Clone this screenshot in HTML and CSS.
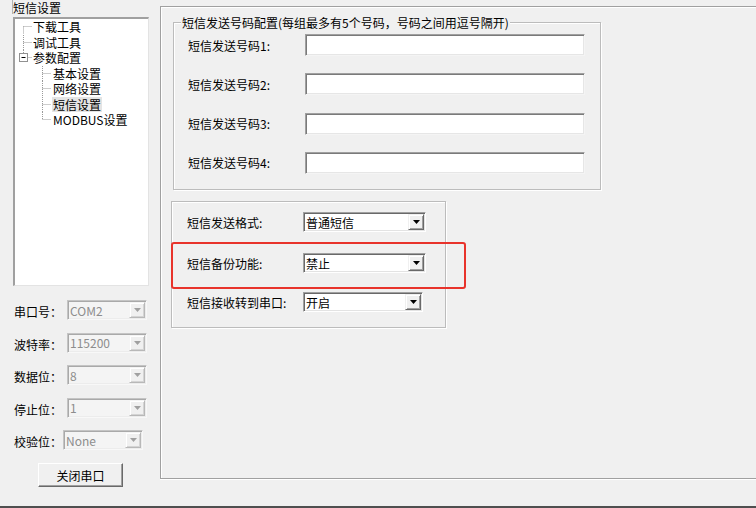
FILE: index.html
```html
<!DOCTYPE html>
<html lang="zh-CN">
<head>
<meta charset="utf-8">
<title>短信设置</title>
<link rel="stylesheet" href="styles.css">
</head>
<body>
<div class="app">
  <aside class="side">
    <div class="caption"><span>短信设置</span></div>
    <div class="tree">
      <div class="node">
        <svg class="guide" width="18" height="15.5" viewBox="0 0 18 15.5"><path class="dot" d="M8.5 7.5V15.5M8.5 7.5H17"/></svg>
        <span class="txt">下载工具</span>
      </div>
      <div class="node">
        <svg class="guide" width="18" height="15.5" viewBox="0 0 18 15.5"><path class="dot" d="M8.5 0V15.5M8.5 7.5H17"/></svg>
        <span class="txt">调试工具</span>
      </div>
      <div class="node">
        <svg class="guide" width="18" height="15.5" viewBox="0 0 18 15.5"><path class="dot" d="M8.5 0V3.5M12.5 7.5H17"/><rect x="4.5" y="3.5" width="8" height="8" fill="#fff" stroke="#919191"/><path d="M6.5 7.5H10.5" stroke="#000"/></svg>
        <span class="txt">参数配置</span>
      </div>
      <div class="node">
        <svg class="guide" width="38" height="15.5" viewBox="0 0 38 15.5"><path class="dot" d="M27.5 0V15.5M27.5 7.5H36"/></svg>
        <span class="txt">基本设置</span>
      </div>
      <div class="node">
        <svg class="guide" width="38" height="15.5" viewBox="0 0 38 15.5"><path class="dot" d="M27.5 0V15.5M27.5 7.5H36"/></svg>
        <span class="txt">网络设置</span>
      </div>
      <div class="node">
        <svg class="guide" width="38" height="15.5" viewBox="0 0 38 15.5"><path class="dot" d="M27.5 0V15.5M27.5 7.5H36"/></svg>
        <span class="txt selected">短信设置</span>
      </div>
      <div class="node">
        <svg class="guide" width="38" height="15.5" viewBox="0 0 38 15.5"><path class="dot" d="M27.5 0V7.5M27.5 7.5H36"/></svg>
        <span class="txt">MODBUS设置</span>
      </div>
    </div>

    <div class="port-form">
      <div class="prow">
        <label class="plabel">串口号：</label>
        <div class="combo disabled pcombo"><span class="val">COM2</span><span class="dbtn"><svg width="7" height="4" viewBox="0 0 7 4"><path d="M0 0H7L3.5 4Z"/></svg></span></div>
      </div>
      <div class="prow">
        <label class="plabel">波特率：</label>
        <div class="combo disabled pcombo"><span class="val">115200</span><span class="dbtn"><svg width="7" height="4" viewBox="0 0 7 4"><path d="M0 0H7L3.5 4Z"/></svg></span></div>
      </div>
      <div class="prow">
        <label class="plabel">数据位：</label>
        <div class="combo disabled pcombo"><span class="val">8</span><span class="dbtn"><svg width="7" height="4" viewBox="0 0 7 4"><path d="M0 0H7L3.5 4Z"/></svg></span></div>
      </div>
      <div class="prow">
        <label class="plabel">停止位：</label>
        <div class="combo disabled pcombo"><span class="val">1</span><span class="dbtn"><svg width="7" height="4" viewBox="0 0 7 4"><path d="M0 0H7L3.5 4Z"/></svg></span></div>
      </div>
      <div class="prow">
        <label class="plabel">校验位：</label>
        <div class="combo disabled pcombo last"><span class="val">None</span><span class="dbtn"><svg width="7" height="4" viewBox="0 0 7 4"><path d="M0 0H7L3.5 4Z"/></svg></span></div>
      </div>
    </div>

    <button class="btn-close">关闭串口</button>
  </aside>

  <main class="panel">
    <div class="group g1">
      <div class="group-title">短信发送号码配置(每组最多有5个号码，号码之间用逗号隔开)</div>
      <div class="rows">
        <div class="frow"><label class="flabel">短信发送号码1:</label><div class="input"></div></div>
        <div class="frow"><label class="flabel">短信发送号码2:</label><div class="input"></div></div>
        <div class="frow"><label class="flabel">短信发送号码3:</label><div class="input"></div></div>
        <div class="frow"><label class="flabel">短信发送号码4:</label><div class="input"></div></div>
      </div>
    </div>

    <div class="group g2">
      <div class="srow r1"><label class="slabel">短信发送格式:</label><div class="combo scombo"><span class="val">普通短信</span><span class="dbtn"><svg width="7" height="4" viewBox="0 0 7 4"><path d="M0 0H7L3.5 4Z"/></svg></span></div></div>
      <div class="srow r2"><label class="slabel">短信备份功能:</label><div class="combo scombo"><span class="val">禁止</span><span class="dbtn"><svg width="7" height="4" viewBox="0 0 7 4"><path d="M0 0H7L3.5 4Z"/></svg></span></div></div>
      <div class="srow r3"><label class="slabel">短信接收转到串口:</label><div class="combo scombo narrow"><span class="val">开启</span><span class="dbtn"><svg width="7" height="4" viewBox="0 0 7 4"><path d="M0 0H7L3.5 4Z"/></svg></span></div></div>
      <div class="mark"></div>
    </div>
  </main>
</div>
</body>
</html>
```

FILE: styles.css
```css
* { box-sizing: border-box; }

html, body {
  margin: 0;
  padding: 0;
}

body {
  width: 756px;
  height: 508px;
  overflow: hidden;
  background: #f0f0f0;
  color: #000;
  font-family: "Noto Sans CJK SC", "Microsoft YaHei", "Liberation Sans", sans-serif;
  font-size: 12px;
}

.app {
  display: flex;
  height: 508px;
  border-bottom: 2px solid #4f4f4f;
}

/* ---------- left column ---------- */
.side {
  width: 160px;
  flex: none;
  display: flex;
  flex-direction: column;
}

.caption {
  margin-left: 12px;
  height: 14px;
  padding-top: 1px;
  border-left: 1px solid #b4b4b4;
}

.caption span {
  display: block;
  line-height: 13px;
  white-space: nowrap;
}

.tree {
  margin: 3px 0 0 13px;
  width: 136px;
  height: 269px;
  background: #fff;
  border-top: 2px solid #a0a0a0;
  border-left: 2px solid #a0a0a0;
  border-right: 1px solid #e3e3e3;
  border-bottom: 1px solid #e3e3e3;
}

.node {
  display: flex;
  align-items: center;
  height: 15.5px;
  line-height: 15.5px;
  white-space: nowrap;
}

.guide {
  display: block;
  flex: none;
}

.dot {
  fill: none;
  stroke: #9a9a9a;
  stroke-width: 1;
  stroke-dasharray: 1 1;
}

.txt {
  padding: 0 1px;
  margin-left: -1px;
}

.txt.selected {
  background: #e4e4e4;
}

.port-form {
  margin-top: 14px;
  padding-left: 14px;
  display: flex;
  flex-direction: column;
  gap: 12.5px;
}

.prow {
  display: flex;
  align-items: center;
  height: 20px;
}

.plabel {
  width: 52px;
  flex: none;
  white-space: nowrap;
  padding-top: 3px;
}

.pcombo {
  width: 80px;
  margin-left: 1px;
}

.pcombo.last {
  margin-left: -3px;
}

.btn-close {
  margin: 13px 0 0 38px;
  width: 85px;
  height: 24px;
  padding: 0;
  font: inherit;
  color: #000;
  background: #f0f0f0;
  border: 1px solid;
  border-color: #fff #696969 #696969 #fff;
  box-shadow: inset -1px -1px 0 #a0a0a0;
}

/* ---------- combo / input ---------- */
.combo {
  height: 20px;
  display: flex;
  align-items: center;
  background: #fff;
  border: 1px solid;
  border-color: #a0a0a0 #fff #fff #a0a0a0;
  box-shadow: inset 1px 1px 0 #696969, inset -1px -1px 0 #e3e3e3;
}

.combo .val {
  flex: 1;
  padding-left: 2px;
  white-space: nowrap;
  overflow: hidden;
}

.dbtn {
  width: 16px;
  height: 16px;
  margin-right: 1px;
  flex: none;
  display: flex;
  align-items: center;
  justify-content: center;
  background: #f0f0f0;
  border: 1px solid;
  border-color: #f0f0f0 #696969 #696969 #f0f0f0;
  box-shadow: inset 1px 1px 0 #fff, inset -1px -1px 0 #a0a0a0;
}

.dbtn svg {
  display: block;
  fill: #000;
}

.combo.disabled {
  background: #f4f4f4;
  border-color: #c4c4c4 #f8f8f8 #f8f8f8 #c4c4c4;
  box-shadow: inset 1px 1px 0 #a9a9a9, inset -1px -1px 0 #ececec;
  color: #8d8d8d;
}

.combo.disabled .dbtn {
  border-color: #f4f4f4 #b8b8b8 #b8b8b8 #f4f4f4;
  box-shadow: inset 1px 1px 0 #fff, inset -1px -1px 0 #d4d4d4;
}

.combo.disabled .dbtn svg {
  fill: #a0a0a0;
}

.input {
  width: 280px;
  height: 22px;
  background: #fff;
  border: 1px solid;
  border-color: #a0a0a0 #f4f4f4 #f4f4f4 #a0a0a0;
  box-shadow: inset 1px 1px 0 #7a7a7a, inset -1px -1px 0 #e6e6e6;
}

/* ---------- right panel ---------- */
.panel {
  flex: 1;
  margin-top: 6px;
  height: 473px;
  border: 1px solid #a0a0a0;
  border-right: none;
  box-shadow: inset 1px 1px 0 #fff, 0 1px 0 #fff;
  display: flex;
  flex-direction: column;
  align-items: flex-start;
}

.group {
  border: 1px solid #bcbcbc;
  box-shadow: inset 1px 1px 0 #fff, 1px 1px 0 #fff;
}

.g1 {
  margin: 15px 0 0 12px;
  width: 428px;
  height: 168px;
}

.group-title {
  width: fit-content;
  margin: -8px 0 0 7px;
  padding: 0 1px;
  line-height: 16px;
  background: #f0f0f0;
  white-space: nowrap;
}

.rows {
  margin-top: 3px;
  padding-left: 14px;
  display: flex;
  flex-direction: column;
  gap: 17.3px;
}

.frow {
  display: flex;
  align-items: center;
  height: 22px;
}

.flabel {
  width: 117px;
  flex: none;
  white-space: nowrap;
}

.g2 {
  position: relative;
  margin: 11px 0 0 10px;
  width: 275px;
  height: 127px;
  padding: 10px 0 0 15px;
}

.srow {
  display: flex;
  align-items: center;
  height: 20px;
}

.srow.r2 { margin-top: 21px; }
.srow.r3 { margin-top: 19px; }

.slabel {
  width: 116px;
  flex: none;
  white-space: nowrap;
}

.scombo {
  width: 123px;
}

.scombo.narrow {
  width: 120px;
}

.mark {
  position: absolute;
  left: -1px;
  top: 40px;
  width: 295px;
  height: 47px;
  border: 2.5px solid #e8332b;
  border-radius: 3px;
  pointer-events: none;
}
```
